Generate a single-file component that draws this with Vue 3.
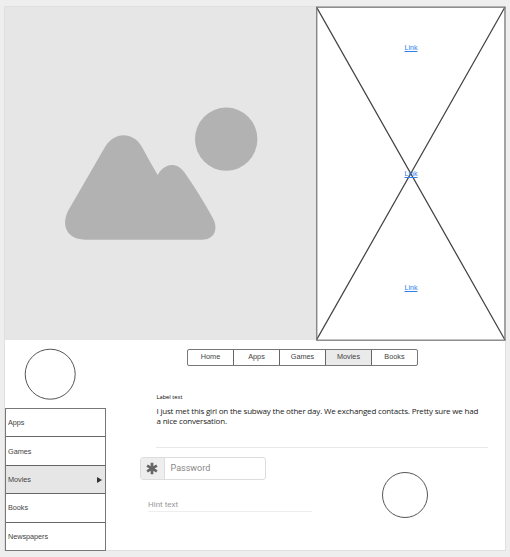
<script setup>
const tabs = ['Home', 'Apps', 'Games', 'Movies', 'Books']
const menu = ['Apps', 'Games', 'Movies', 'Books', 'Newspapers']
const links = ['Link', 'Link', 'Link']
const active = 'Movies'
</script>

<template>
  <main class="page">
    <section class="hero">
      <div class="picture">
        <svg width="311" height="333" viewBox="5 7 311 333">
          <ellipse cx="226.2" cy="139.2" rx="31.2" ry="31.6" />
          <path d="M105 147C114 131.500 133 131 142 147Q149 160.500 157.700 175C165 162.500 177 162 184.500 172.500Q199 193 212.500 217.500C219 229 214.500 239.700 202 239.700H86C68 239.700 60.500 227 68 211Z" />
        </svg>
      </div>
      <div class="frame">
        <svg class="cross" width="190" height="335" viewBox="0 0 190 335">
          <path d="M.5 1L189 334M189 1L.5 334" />
          <rect x=".75" y="1.200" width="188.200" height="333" />
        </svg>
        <a v-for="(link, i) in links" :key="i" class="link">{{ link }}</a>
      </div>
    </section>
    <section class="lower">
      <aside class="side">
        <svg class="avatar" width="52" height="52"><circle cx="26.200" cy="26.200" r="25" /></svg>
        <ul class="menu">
          <li v-for="item in menu" :key="item" :class="{ active: item === active }">
            <span>{{ item }}</span>
            <svg v-if="item === active" width="5" height="6"><path d="M0 0L5 3L0 6Z" /></svg>
          </li>
        </ul>
      </aside>
      <div class="content">
        <nav class="tabs">
          <a v-for="tab in tabs" :key="tab" :class="{ active: tab === active }">{{ tab }}</a>
        </nav>
        <article class="copy">
          <h2>Label text</h2>
          <p>I just met this girl on the subway the other day. We exchanged contacts. Pretty sure we had<br>a nice conversation.</p>
        </article>
        <div class="bottom">
          <div class="form">
            <div class="password">
              <span class="addon">
                <svg width="12" height="13" viewBox="-6 -6.500 12 13"><path d="M0-5.800V5.800M-4.900-2.900L4.900 2.900M-4.900 2.900L4.900-2.900" /></svg>
              </span>
              <span class="value">Password</span>
            </div>
            <div class="hint">Hint text</div>
          </div>
          <svg class="round" width="48" height="48"><circle cx="24" cy="24" r="22.500" /></svg>
        </div>
      </div>
    </section>
  </main>
</template>

<style>
body { background: #eee; }
</style>

<style scoped>
.page {
  box-sizing: border-box;
  width: 502px;
  height: 545px;
  margin: 6px 0 6px 4px;
  border: 1px solid #e0e0e0;
  background: #fff;
  font-family: "Liberation Sans", Arial, sans-serif;
  font-size: 7.3px;
  color: #444;
}
svg { display: block; }
.hero { display: flex; height: 333px; }
.picture { width: 311px; background: #e6e6e6; fill: #b2b2b2; }
.frame {
  position: relative;
  display: flex;
  flex-direction: column;
  align-items: center;
  width: 190px;
  height: 334px;
  background: #fff;
}
.cross { position: absolute; left: 0; top: -1px; fill: none; stroke: #444; stroke-width: 1.25; }
.cross rect { stroke: #777; }
.link { position: relative; margin-top: 37px; padding-left: 1px; height: 9px; line-height: 9px; font-size: 7.1px; color: #2f80ed; text-decoration: underline; }
.link + .link { margin-top: 117px; }
.link + .link + .link { margin-top: 105px; }
.lower { display: flex; height: 210px; }
.side { width: 101px; }
.avatar, .round { fill: none; stroke: #555; stroke-width: 1; }
.avatar { margin: 8px 0 0 19px; }
.menu { width: 101px; box-sizing: border-box; margin: 8px 0 0; padding: 0; list-style: none; border: 1px solid #777; height: 143px; display: flex; flex-direction: column; }
.menu li { flex: 1; display: flex; align-items: center; justify-content: space-between; padding: 0 3px 0 2px; border-top: 1px solid #666; letter-spacing: -0.05px; }
.menu li:first-child { border-top: 0; }
.menu .active { background: #e6e6e6; }
.menu svg { fill: #333; margin-top: 1px; }
.content { width: 399px; }
.tabs { display: flex; box-sizing: border-box; width: 231px; height: 17px; margin: 9px 0 0 81px; border: 1px solid #777; border-radius: 2px; }
.tabs a { flex: 1; text-align: center; line-height: 14px; }
.tabs a + a { border-left: 1px solid #666; }
.tabs .active { background: #eaeaea; }
.copy { box-sizing: border-box; width: 332px; height: 55px; margin: 27px 0 0 50px; padding-left: .5px; border-bottom: 1px solid #e8e8e8; font-family: "Open Sans", sans-serif; color: #222; white-space: nowrap; }
.copy h2 { margin: 0; font-size: 5.7px; line-height: 8px; font-weight: 400; color: #000; }
.copy p { margin: 5px 0 0; font-size: 8px; line-height: 10px; letter-spacing: -0.19px; }
.bottom { display: flex; }
.form { width: 275px; font-family: Roboto, sans-serif; color: #888; }
.password { display: flex; box-sizing: border-box; width: 126px; height: 23px; margin: 9px 0 0 33.5px; border: 1px solid #ddd; border-radius: 3px; }
.addon { display: flex; align-items: center; justify-content: center; width: 23px; border-right: 1px solid #ddd; background: #eee; }
.addon svg { stroke: #666; stroke-width: 2.7; }
.value { padding-left: 6px; font-size: 9px; line-height: 20px; }
.hint { width: 164px; height: 12px; margin: 19px 0 0 42px; border-bottom: 1px solid #eee; font-size: 8px; line-height: 11px; color: #999; }
.round { margin-top: 23px; }
</style>
